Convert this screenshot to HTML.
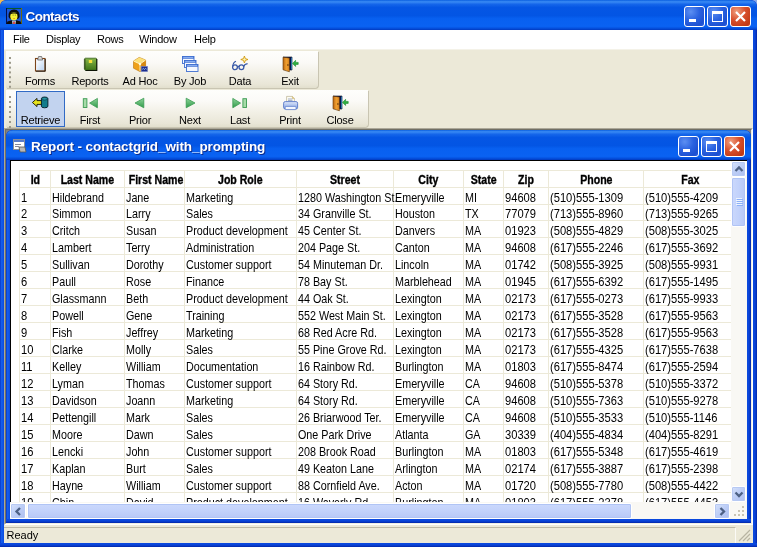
<!DOCTYPE html>
<html><head><meta charset="utf-8"><title>Contacts</title>
<style>
*{box-sizing:border-box;margin:0;padding:0}
html,body{width:757px;height:547px;overflow:hidden;background:#fff;font-family:"Liberation Sans",sans-serif;font-size:11px;color:#000}
.abs{position:absolute}
#win{will-change:transform;position:absolute;left:0;top:0;width:757px;height:547px;background:#0a3fd6;border-radius:6px 6px 0 0;overflow:hidden}
#tbar{position:absolute;left:0;top:0;width:757px;height:30px;
 background:linear-gradient(180deg,#0a5fe0 0%,#3a8bf4 6%,#1566ea 14%,#0556e4 25%,#0355e4 52%,#0860f0 62%,#0a62f2 88%,#0552e0 94%,#0340c8 98%,#0340c8 100%);border-radius:7px 7px 0 0}
#tbar .ttl{position:absolute;left:25.5px;top:9px;font:bold 13.5px "Liberation Sans",sans-serif;color:#fff;text-shadow:1px 1px 0 #0a2a8c;letter-spacing:-0.55px;white-space:nowrap}
#lb{position:absolute;left:0;top:30px;width:4px;height:517px;background:linear-gradient(90deg,#0a36c8,#1560ee 40%,#0a4ae0)}
#rb{position:absolute;left:753px;top:30px;width:4px;height:517px;background:linear-gradient(90deg,#0a4ae0,#0a44d8 50%,#0326a8)}
#bb{position:absolute;left:0;top:543px;width:757px;height:4px;background:linear-gradient(180deg,#0a4ae0,#0a44d8 50%,#0326a8)}
#client{position:absolute;left:4px;top:30px;width:749px;height:513px;background:#ece9d8}
#menu{position:absolute;left:0;top:0;width:749px;height:20px;background:#fff;border-bottom:1px solid #f4f2e8}
#menu span{position:absolute;top:3px;font-size:11px;letter-spacing:-0.25px;white-space:nowrap}
.cbtn{position:absolute;width:21px;height:21px;border:1px solid #fff;border-radius:3px;background:radial-gradient(circle at 30% 25%,#5c8ff2 0%,#2a62e0 45%,#1c4fd0 80%,#2a5ee0 100%)}
.cbtn.close{background:radial-gradient(circle at 30% 25%,#f0a080 0%,#d8502c 45%,#c03814 85%,#c84a28 100%)}
.cbtn svg{position:absolute;left:0;top:0}
.tb{position:absolute;height:37px;background:linear-gradient(180deg,#fefefc 0%,#fbfaf7 30%,#f2f0e6 60%,#e9e6d7 90%,#e2dfcd 100%);border-radius:0 0 4px 0;box-shadow:1px 1px 0 #c9c5b2}
.grip{position:absolute;left:3px;width:3px}
.tbtn{position:absolute;width:48px;height:37px;text-align:center}
.tbtn .lbl{position:absolute;left:-10px;right:-10px;top:23px;font-size:11px;letter-spacing:-0.2px;text-align:center;white-space:nowrap}
.tbtn svg{position:absolute;left:16px;top:4px;overflow:visible}
.tbtn.sel{box-shadow:0 0 0 1px #316ac5 inset;background:#c2d3ef}
#child{position:absolute;left:2px;top:100px;width:745px;height:393px;background:#0a3fd6;border-radius:6px 6px 0 0;overflow:hidden}
#ctbar{position:absolute;left:0;top:0;width:745px;height:30px;border-radius:7px 7px 0 0;
 background:linear-gradient(180deg,#0a5fe0 0%,#3a8bf4 6%,#1566ea 14%,#0556e4 25%,#0355e4 52%,#0860f0 62%,#0a62f2 88%,#0552e0 94%,#0340c8 98%,#0340c8 100%)}
#ctbar .ttl{position:absolute;left:25px;top:9px;font:bold 13.5px "Liberation Sans",sans-serif;color:#fff;text-shadow:1px 1px 0 #0a2a8c;letter-spacing:-0.1px;white-space:nowrap}
#clb{position:absolute;left:0;top:30px;width:4px;height:363px;background:linear-gradient(90deg,#0a36c8,#1560ee 40%,#0a4ae0)}
#crb{position:absolute;left:741px;top:30px;width:4px;height:363px;background:linear-gradient(90deg,#0a4ae0,#0a44d8 50%,#0326a8)}
#cbb{position:absolute;left:0;top:389px;width:745px;height:4px;background:linear-gradient(180deg,#0a4ae0,#0a44d8 50%,#0326a8)}
#cclient{position:absolute;left:4px;top:30px;width:737px;height:359px;background:#fff;border-top:1px solid #000;overflow:hidden}
#lline{position:absolute;left:0;top:0;width:1px;height:341px;background:#000}
#view{position:absolute;left:1px;top:0;width:720px;height:341px;overflow:hidden;background:#fff}
table.grid{position:absolute;left:8px;top:9px;border-collapse:collapse;table-layout:fixed;width:717px}
table.grid td,table.grid th{border:1px solid #ece9d8;height:17px;padding:0 0 0 2px;font-size:11px;line-height:16px;white-space:nowrap;overflow:visible;text-align:left;vertical-align:top}
table.grid td{padding-top:4px;line-height:12px;padding-left:1px;font-size:12.4px}
table.grid td span{display:inline-block;transform:scaleX(0.868);transform-origin:0 50%}
table.grid td span.n{transform:scaleX(0.9)}
table.grid tr.s td{height:16px;line-height:12px;padding-top:3px}
table.grid th{font-weight:bold;font-size:12px;text-align:center;padding:2px 0 0 0;line-height:14px}
table.grid th span{display:inline-block;transform:scaleX(0.88);transform-origin:50% 50%;-webkit-text-stroke:0.35px #000}
.c0{width:31px}.c1{width:74px}.c2{width:60px}.c3{width:112px}.c4{width:97px}.c5{width:70px}.c6{width:40px}.c7{width:45px}.c8{width:95px}.c9{width:93px}
#vs{position:absolute;left:721px;top:0;width:16px;height:341px;background:#f9f8f4}
#hs{position:absolute;left:0;top:341px;width:721px;height:17px;background:#f9f8f4}
#corner{position:absolute;left:721px;top:341px;width:16px;height:17px;background:#f9f8f4}
.sbtn{position:absolute;width:15px;height:15px;border:1px solid #fff;border-radius:2px;background:linear-gradient(135deg,#d6e2fb,#bccdf6 50%,#aebff0);box-shadow:0 0 0 1px #b7c9f3 inset}
.thumb{position:absolute;border:1px solid #fff;border-radius:2px;background:linear-gradient(180deg,#cbd8fc,#c2d2fb 50%,#b7c8f7);box-shadow:0 0 0 1px #b0c4f5 inset}
#status{position:absolute;left:0;top:497px;width:749px;height:16px;background:#ece9d8}
#status .pn{position:absolute;left:0;top:0;width:732px;height:16px;border-top:1px solid #bdb9a6;border-right:1px solid #fbfaf6}
#status span{position:absolute;left:2.5px;top:1.5px;font-size:11px}
</style></head><body><svg width="0" height="0" style="position:absolute"><defs><linearGradient id="gGreen" x1="0" y1="0" x2="0" y2="1"><stop offset="0" stop-color="#86b648"/><stop offset="1" stop-color="#3f7418"/></linearGradient><linearGradient id="gPaper" x1="0" y1="0" x2="1" y2="1"><stop offset="0" stop-color="#ffffff"/><stop offset="1" stop-color="#bcd4f0"/></linearGradient><linearGradient id="gDoor" x1="0" y1="0" x2="1" y2="0"><stop offset="0" stop-color="#b86410"/><stop offset="0.5" stop-color="#f0a030"/><stop offset="1" stop-color="#e08820"/></linearGradient><linearGradient id="gTri" x1="0" y1="0" x2="0" y2="1"><stop offset="0" stop-color="#8fd49a"/><stop offset="1" stop-color="#2f9a48"/></linearGradient><linearGradient id="gPrn" x1="0" y1="0" x2="0" y2="1"><stop offset="0" stop-color="#dfe8fb"/><stop offset="1" stop-color="#7f9fe0"/></linearGradient></defs></svg>
<div class="abs" style="left:0;top:0;width:7px;height:7px;background:#f2bc50"></div><div class="abs" style="left:750px;top:0;width:7px;height:7px;background:#8aaae8"></div>
<div id="win">
 <div id="tbar">
  <svg class="abs" style="left:6px;top:8px" width="16" height="16" viewBox="0 0 16 16">
   <rect x="0" y="0" width="16" height="16" fill="#1a56d8"/>
   <rect x="0" y="0" width="16" height="1" fill="#0a5a2a"/><rect x="15" y="0" width="1" height="16" fill="#6a6a10"/>
   <rect x="0" y="0" width="1" height="16" fill="#06104a"/>
   <path d="M2.6 9 Q2 2 8 1.6 Q14 2 13.6 9 L12 11 L4 11 Z" fill="#0c0c0c"/>
   <ellipse cx="7.9" cy="8.2" rx="3.6" ry="4.3" fill="#f4f032"/>
   <path d="M4.3 6.4 Q5 3.6 8 4.4 Q11 3.6 11.6 6.4 Q10 5.2 8 5.6 Q6 5.2 4.3 6.4Z" fill="#0c0c0c"/>
   <path d="M0.6 16 L1.4 13.6 L5.6 12.2 L8 14.6 L10.4 12.2 L14.6 13.6 L15.4 16Z" fill="#0c0c0c"/>
   <path d="M6.2 12.8 L8 13.8 L9.8 12.8 L9.4 16 L6.6 16Z" fill="#fff"/>
   <rect x="7.2" y="13.8" width="1.6" height="2.2" fill="#d42020"/>
   <rect x="6.6" y="6.6" width="1" height="1" fill="#807820"/><rect x="8.8" y="6.6" width="1" height="1" fill="#807820"/>
   <rect x="7.2" y="10" width="1.8" height="0.9" fill="#e8902a"/>
  </svg>
  <div class="ttl">Contacts</div>
  <div class="cbtn" style="left:684px;top:6px"><svg width="19" height="19"><rect x="4" y="12" width="7" height="3" fill="#fff"/></svg></div>
  <div class="cbtn" style="left:707px;top:6px"><svg width="19" height="19"><rect x="4.5" y="5.5" width="10" height="9" fill="none" stroke="#fff" stroke-width="1"/><rect x="4" y="4" width="11" height="3" fill="#fff"/></svg></div>
  <div class="cbtn close" style="left:730px;top:6px"><svg width="19" height="19"><path d="M5 5 L14 14 M14 5 L5 14" stroke="#fff" stroke-width="2.2" stroke-linecap="butt"/></svg></div>
 </div>
 <div id="lb"></div><div id="rb"></div><div id="bb"></div>
 <div id="client">
  <div id="menu">
   <span style="left:9px">File</span><span style="left:42px">Display</span><span style="left:93px">Rows</span><span style="left:135px">Window</span><span style="left:190px">Help</span>
  </div>
  <!-- toolbar 1 -->
  <div class="tb" style="left:2px;top:21px;width:312px">
   <svg class="grip" style="top:6px" width="3" height="34"><g fill="#9d9a8b"><rect x="0" y="0.0" width="2" height="2"/><rect x="0" y="4.8" width="2" height="2"/><rect x="0" y="9.6" width="2" height="2"/><rect x="0" y="14.4" width="2" height="2"/><rect x="0" y="19.2" width="2" height="2"/><rect x="0" y="24.0" width="2" height="2"/><rect x="0" y="28.8" width="2" height="2"/></g></svg>
   <div class="tbtn" style="left:10px;top:1px"><svg width="16" height="16" viewBox="0 0 16 16"><rect x="3.5" y="2.5" width="9.5" height="12.5" fill="#f2f6fc" stroke="#7c4418" stroke-width="1.1"/><path d="M13.2 3 V15.2 H4" stroke="#1a1208" stroke-width="0.9" fill="none"/><rect x="4.8" y="4" width="7" height="10" fill="url(#gPaper)"/><path d="M6 2.5 L6.6 0.5 H9.6 L10.2 2.5 L10.6 4 H5.6Z" fill="#d8d8d8" stroke="#555" stroke-width="0.7"/></svg><div class="lbl">Forms</div></div>
   <div class="tbtn" style="left:60px;top:1px"><svg width="16" height="16" viewBox="0 0 16 16"><rect x="2.6" y="2.2" width="12" height="12" rx="0.8" fill="url(#gGreen)" stroke="#35601a" stroke-width="0.8"/><path d="M14.8 3 V14.5 H3.5" stroke="#0c1404" stroke-width="1.1" fill="none"/><rect x="6.8" y="4" width="3.4" height="3" fill="#f4de3a"/><path d="M1.8 4h2M1.8 6h2M1.8 8h2M1.8 10h2M1.8 12h2" stroke="#2a3a1a" stroke-width="0.9"/></svg><div class="lbl">Reports</div></div>
   <div class="tbtn" style="left:110px;top:1px"><svg width="16" height="16" viewBox="0 0 16 16"><path d="M1.5 5 L7.2 1.4 L13.6 4 L13.6 11.6 L8 15.6 L1.5 12.2Z" fill="#eea018" stroke="#b87408" stroke-width="0.6"/><path d="M1.5 5 L7.2 1.4 L13.6 4 L8 8Z" fill="#fbe07a"/><path d="M8 8 L13.6 4 L13.6 11.6 L8 15.6Z" fill="#d88a10"/><path d="M8 8 L1.5 5 M8 8 L13.6 4 M8 8 V15" stroke="#fff6c8" stroke-width="0.9" fill="none"/><circle cx="8" cy="8" r="1.2" fill="#fffbe6"/><rect x="9.2" y="10.4" width="6.4" height="5.2" fill="#1c2c8c" stroke="#7888c8" stroke-width="0.6"/><path d="M10.2 13.4 L11.4 12.4 L12.4 13.6 L13.4 12.4 L14.6 13.2" stroke="#a8d8f8" stroke-width="0.8" fill="none"/></svg><div class="lbl">Ad Hoc</div></div>
   <div class="tbtn" style="left:160px;top:1px"><svg width="16" height="16" viewBox="0 0 16 16"><rect x="0.5" y="0.5" width="11.5" height="7" fill="#f4f8ff" stroke="#3f6fd0" stroke-width="0.9"/><rect x="0.5" y="0.5" width="11.5" height="2.2" fill="#3a6ad0"/><rect x="1.2" y="1.0" width="10" height="0.8" fill="#9cc0f8"/><rect x="2.5" y="4.5" width="11.5" height="7" fill="#f4f8ff" stroke="#3f6fd0" stroke-width="0.9"/><rect x="2.5" y="4.5" width="11.5" height="2.2" fill="#3a6ad0"/><rect x="3.2" y="5.0" width="10" height="0.8" fill="#9cc0f8"/><rect x="4.5" y="8.5" width="11.5" height="7" fill="#f4f8ff" stroke="#3f6fd0" stroke-width="0.9"/><rect x="4.5" y="8.5" width="11.5" height="2.2" fill="#3a6ad0"/><rect x="5.2" y="9.0" width="10" height="0.8" fill="#9cc0f8"/></svg><div class="lbl">By Job</div></div>
   <div class="tbtn" style="left:210px;top:1px"><svg width="16" height="16" viewBox="0 0 16 16"><circle cx="3" cy="11.3" r="2.4" fill="none" stroke="#3a5aa8" stroke-width="1.3"/><circle cx="9.4" cy="11.3" r="2.4" fill="none" stroke="#3a5aa8" stroke-width="1.3"/><path d="M0.7 10.5 Q1 6.5 4 5.3 M11.8 10.6 Q12.5 8 15.6 7.6 M5.4 10.8 Q6.2 10 7 10.8" stroke="#3a5aa8" stroke-width="1.1" fill="none"/><path d="M12.4 0 L13.3 2.6 L16 3.5 L13.3 4.4 L12.4 7 L11.5 4.4 L8.8 3.5 L11.5 2.6Z" fill="#fff4b0" stroke="#d09810" stroke-width="0.9"/></svg><div class="lbl">Data</div></div>
   <div class="tbtn" style="left:260px;top:1px"><svg width="16" height="16" viewBox="0 0 16 16"><path d="M1 1 H10 V14 H7.4" fill="#0a1248" stroke="#080c20" stroke-width="0.6"/><path d="M9.6 1.5 V13.6" stroke="#3a9ad0" stroke-width="0.8"/><path d="M1 1.2 L7.4 2 L7.4 15.8 L1 13.8Z" fill="url(#gDoor)" stroke="#5a3408" stroke-width="0.6"/><circle cx="5.9" cy="9" r="0.7" fill="#402000"/><path d="M10.5 7.4 L13.6 4.3 L13.6 6.4 L16.2 6.4 L16.2 8.4 L13.6 8.4 L13.6 10.5Z" fill="#30b040" stroke="#188828" stroke-width="0.6"/></svg><div class="lbl">Exit</div></div>
  </div>
  <!-- toolbar 2 -->
  <div class="tb" style="left:2px;top:60px;width:362px;height:37px">
   <svg class="grip" style="top:6px" width="3" height="34"><g fill="#9d9a8b"><rect x="0" y="0.0" width="2" height="2"/><rect x="0" y="5.0" width="2" height="2"/><rect x="0" y="10.0" width="2" height="2"/><rect x="0" y="15.0" width="2" height="2"/><rect x="0" y="20.0" width="2" height="2"/><rect x="0" y="25.0" width="2" height="2"/><rect x="0" y="30.0" width="2" height="2"/></g></svg>
   <div class="tbtn sel" style="left:10px;top:1px;width:49px;height:36px"><svg width="16" height="16" viewBox="0 0 16 16"><path d="M0.4 7.5 L5 3.4 L5 5.6 L10 5.6 L10 9.4 L5 9.4 L5 11.6Z" fill="#e6e21c" stroke="#141400" stroke-width="0.9"/><path d="M9.4 3.6 Q9.4 2 12.6 2 Q15.9 2 15.9 3.6 V11.2 Q15.9 12.8 12.6 12.8 Q9.4 12.8 9.4 11.2Z" fill="#127c8c" stroke="#041c24" stroke-width="0.9"/><ellipse cx="12.6" cy="3.8" rx="2.8" ry="1.2" fill="#2aa0b0" stroke="#041c24" stroke-width="0.5"/></svg><div class="lbl">Retrieve</div></div>
   <div class="tbtn" style="left:60px;top:1px"><svg width="16" height="16" viewBox="0 0 16 16"><rect x="1.3" y="3.7" width="3.6" height="8.8" fill="#a6dba8" stroke="#3a9a50" stroke-width="0.9"/><path d="M15.4 3.4 L7.6 8.1 L15.4 12.8Z" fill="url(#gTri)" stroke="#3a9a50" stroke-width="0.8"/></svg><div class="lbl">First</div></div>
   <div class="tbtn" style="left:110px;top:1px"><svg width="16" height="16" viewBox="0 0 16 16"><path d="M11.8 3.2 L3 8 L11.8 12.8Z" fill="url(#gTri)" stroke="#3a9a50" stroke-width="0.8"/></svg><div class="lbl">Prior</div></div>
   <div class="tbtn" style="left:160px;top:1px"><svg width="16" height="16" viewBox="0 0 16 16"><path d="M4.2 3.2 L13 8 L4.2 12.8Z" fill="url(#gTri)" stroke="#3a9a50" stroke-width="0.8"/></svg><div class="lbl">Next</div></div>
   <div class="tbtn" style="left:210px;top:1px"><svg width="16" height="16" viewBox="0 0 16 16"><rect x="10.9" y="3.7" width="3.6" height="8.8" fill="#a6dba8" stroke="#3a9a50" stroke-width="0.9"/><path d="M0.8 3.4 L8.6 8.1 L0.8 12.8Z" fill="url(#gTri)" stroke="#3a9a50" stroke-width="0.8"/></svg><div class="lbl">Last</div></div>
   <div class="tbtn" style="left:260px;top:1px"><svg width="16" height="16" viewBox="0 0 16 16"><path d="M4.6 7 V1.4 H10.4 L12.4 3.4 V7Z" fill="#fffdf4" stroke="#b8b090" stroke-width="0.7"/><path d="M10.4 1.4 V3.4 H12.4" fill="#f0d890" stroke="#c8a850" stroke-width="0.5"/><path d="M6 4h4.5M6 5.6h4.5" stroke="#8898b8" stroke-width="0.8"/><rect x="1.6" y="6.6" width="14" height="7.4" rx="1.6" fill="url(#gPrn)" stroke="#5878c8" stroke-width="0.9"/><rect x="3.2" y="11.4" width="10.8" height="3.2" rx="0.6" fill="#f4f7fe" stroke="#5878c8" stroke-width="0.7"/></svg><div class="lbl">Print</div></div>
   <div class="tbtn" style="left:310px;top:1px"><svg width="16" height="16" viewBox="0 0 16 16"><path d="M1 1 H10 V14 H7.4" fill="#0a1248" stroke="#080c20" stroke-width="0.6"/><path d="M9.6 1.5 V13.6" stroke="#3a9ad0" stroke-width="0.8"/><path d="M1 1.2 L7.4 2 L7.4 15.8 L1 13.8Z" fill="url(#gDoor)" stroke="#5a3408" stroke-width="0.6"/><circle cx="5.9" cy="9" r="0.7" fill="#402000"/><path d="M10.5 7.4 L13.6 4.3 L13.6 6.4 L16.2 6.4 L16.2 8.4 L13.6 8.4 L13.6 10.5Z" fill="#30b040" stroke="#188828" stroke-width="0.6"/></svg><div class="lbl">Close</div></div>
  </div>
  <!-- MDI client -->
  <div class="abs" style="left:0;top:98px;width:749px;height:397px;background:#808080;border-left:1px solid #aca899;border-top:1px solid #aca899;border-right:1px solid #fff;border-bottom:1px solid #fff"></div>
  <div class="abs" style="left:1px;top:99px;width:747px;height:395px;border-left:1px solid #716f64;border-top:1px solid #716f64;border-right:1px solid #f1efe2;border-bottom:1px solid #f1efe2"></div>
  <!-- MDI child -->
  <div id="child">
   <div id="ctbar">
    <svg class="abs" style="left:7px;top:9px" width="14" height="14" viewBox="0 0 14 14"><rect x="0.5" y="0.5" width="11" height="10" fill="#fff" stroke="#8a8f9c"/><rect x="1" y="1" width="10" height="2" fill="#5a7cc8"/><rect x="2" y="5" width="6" height="1" fill="#889"/><rect x="2" y="7" width="4" height="1" fill="#889"/><path d="M6 8 L12 8 L13 13 L7 13Z" fill="#b8b8b8" stroke="#555" stroke-width="0.8"/></svg>
    <div class="ttl">Report - contactgrid_with_prompting</div>
    <div class="cbtn" style="left:672px;top:6px"><svg width="19" height="19"><rect x="4" y="12" width="7" height="3" fill="#fff"/></svg></div>
    <div class="cbtn" style="left:695px;top:6px"><svg width="19" height="19"><rect x="4.5" y="5.5" width="10" height="9" fill="none" stroke="#fff" stroke-width="1"/><rect x="4" y="4" width="11" height="3" fill="#fff"/></svg></div>
    <div class="cbtn close" style="left:718px;top:6px"><svg width="19" height="19"><path d="M5 5 L14 14 M14 5 L5 14" stroke="#fff" stroke-width="2.2"/></svg></div>
   </div>
   <div id="clb"></div><div id="crb"></div><div id="cbb"></div>
   <div id="cclient">
    <div id="lline"></div>
    <div id="view">
<table class="grid"><colgroup><col class="c0"><col class="c1"><col class="c2"><col class="c3"><col class="c4"><col class="c5"><col class="c6"><col class="c7"><col class="c8"><col class="c9"></colgroup>
<tr class="hd"><th><span>Id</span></th><th><span>Last Name</span></th><th><span>First Name</span></th><th><span>Job Role</span></th><th><span>Street</span></th><th><span>City</span></th><th><span>State</span></th><th><span>Zip</span></th><th><span>Phone</span></th><th><span>Fax</span></th></tr>
<tr><td><span class="n">1</span></td><td><span>Hildebrand</span></td><td><span>Jane</span></td><td><span>Marketing</span></td><td><span>1280 Washington St.</span></td><td><span>Emeryville</span></td><td><span>MI</span></td><td><span class="n">94608</span></td><td><span class="n">(510)555-1309</span></td><td><span class="n">(510)555-4209</span></td></tr>
<tr class="s"><td><span class="n">2</span></td><td><span>Simmon</span></td><td><span>Larry</span></td><td><span>Sales</span></td><td><span>34 Granville St.</span></td><td><span>Houston</span></td><td><span>TX</span></td><td><span class="n">77079</span></td><td><span class="n">(713)555-8960</span></td><td><span class="n">(713)555-9265</span></td></tr>
<tr><td><span class="n">3</span></td><td><span>Critch</span></td><td><span>Susan</span></td><td><span>Product development</span></td><td><span>45 Center St.</span></td><td><span>Danvers</span></td><td><span>MA</span></td><td><span class="n">01923</span></td><td><span class="n">(508)555-4829</span></td><td><span class="n">(508)555-3025</span></td></tr>
<tr><td><span class="n">4</span></td><td><span>Lambert</span></td><td><span>Terry</span></td><td><span>Administration</span></td><td><span>204 Page St.</span></td><td><span>Canton</span></td><td><span>MA</span></td><td><span class="n">94608</span></td><td><span class="n">(617)555-2246</span></td><td><span class="n">(617)555-3692</span></td></tr>
<tr><td><span class="n">5</span></td><td><span>Sullivan</span></td><td><span>Dorothy</span></td><td><span>Customer support</span></td><td><span>54 Minuteman Dr.</span></td><td><span>Lincoln</span></td><td><span>MA</span></td><td><span class="n">01742</span></td><td><span class="n">(508)555-3925</span></td><td><span class="n">(508)555-9931</span></td></tr>
<tr><td><span class="n">6</span></td><td><span>Paull</span></td><td><span>Rose</span></td><td><span>Finance</span></td><td><span>78 Bay St.</span></td><td><span>Marblehead</span></td><td><span>MA</span></td><td><span class="n">01945</span></td><td><span class="n">(617)555-6392</span></td><td><span class="n">(617)555-1495</span></td></tr>
<tr><td><span class="n">7</span></td><td><span>Glassmann</span></td><td><span>Beth</span></td><td><span>Product development</span></td><td><span>44 Oak St.</span></td><td><span>Lexington</span></td><td><span>MA</span></td><td><span class="n">02173</span></td><td><span class="n">(617)555-0273</span></td><td><span class="n">(617)555-9933</span></td></tr>
<tr><td><span class="n">8</span></td><td><span>Powell</span></td><td><span>Gene</span></td><td><span>Training</span></td><td><span>552 West Main St.</span></td><td><span>Lexington</span></td><td><span>MA</span></td><td><span class="n">02173</span></td><td><span class="n">(617)555-3528</span></td><td><span class="n">(617)555-9563</span></td></tr>
<tr><td><span class="n">9</span></td><td><span>Fish</span></td><td><span>Jeffrey</span></td><td><span>Marketing</span></td><td><span>68 Red Acre Rd.</span></td><td><span>Lexington</span></td><td><span>MA</span></td><td><span class="n">02173</span></td><td><span class="n">(617)555-3528</span></td><td><span class="n">(617)555-9563</span></td></tr>
<tr><td><span class="n">10</span></td><td><span>Clarke</span></td><td><span>Molly</span></td><td><span>Sales</span></td><td><span>55 Pine Grove Rd.</span></td><td><span>Lexington</span></td><td><span>MA</span></td><td><span class="n">02173</span></td><td><span class="n">(617)555-4325</span></td><td><span class="n">(617)555-7638</span></td></tr>
<tr><td><span class="n">11</span></td><td><span>Kelley</span></td><td><span>William</span></td><td><span>Documentation</span></td><td><span>16 Rainbow Rd.</span></td><td><span>Burlington</span></td><td><span>MA</span></td><td><span class="n">01803</span></td><td><span class="n">(617)555-8474</span></td><td><span class="n">(617)555-2594</span></td></tr>
<tr><td><span class="n">12</span></td><td><span>Lyman</span></td><td><span>Thomas</span></td><td><span>Customer support</span></td><td><span>64 Story Rd.</span></td><td><span>Emeryville</span></td><td><span>CA</span></td><td><span class="n">94608</span></td><td><span class="n">(510)555-5378</span></td><td><span class="n">(510)555-3372</span></td></tr>
<tr><td><span class="n">13</span></td><td><span>Davidson</span></td><td><span>Joann</span></td><td><span>Marketing</span></td><td><span>64 Story Rd.</span></td><td><span>Emeryville</span></td><td><span>CA</span></td><td><span class="n">94608</span></td><td><span class="n">(510)555-7363</span></td><td><span class="n">(510)555-9278</span></td></tr>
<tr><td><span class="n">14</span></td><td><span>Pettengill</span></td><td><span>Mark</span></td><td><span>Sales</span></td><td><span>26 Briarwood Ter.</span></td><td><span>Emeryville</span></td><td><span>CA</span></td><td><span class="n">94608</span></td><td><span class="n">(510)555-3533</span></td><td><span class="n">(510)555-1146</span></td></tr>
<tr><td><span class="n">15</span></td><td><span>Moore</span></td><td><span>Dawn</span></td><td><span>Sales</span></td><td><span>One Park Drive</span></td><td><span>Atlanta</span></td><td><span>GA</span></td><td><span class="n">30339</span></td><td><span class="n">(404)555-4834</span></td><td><span class="n">(404)555-8291</span></td></tr>
<tr><td><span class="n">16</span></td><td><span>Lencki</span></td><td><span>John</span></td><td><span>Customer support</span></td><td><span>208 Brook Road</span></td><td><span>Burlington</span></td><td><span>MA</span></td><td><span class="n">01803</span></td><td><span class="n">(617)555-5348</span></td><td><span class="n">(617)555-4619</span></td></tr>
<tr><td><span class="n">17</span></td><td><span>Kaplan</span></td><td><span>Burt</span></td><td><span>Sales</span></td><td><span>49 Keaton Lane</span></td><td><span>Arlington</span></td><td><span>MA</span></td><td><span class="n">02174</span></td><td><span class="n">(617)555-3887</span></td><td><span class="n">(617)555-2398</span></td></tr>
<tr><td><span class="n">18</span></td><td><span>Hayne</span></td><td><span>William</span></td><td><span>Customer support</span></td><td><span>88 Cornfield Ave.</span></td><td><span>Acton</span></td><td><span>MA</span></td><td><span class="n">01720</span></td><td><span class="n">(508)555-7780</span></td><td><span class="n">(508)555-4422</span></td></tr>
<tr><td><span class="n">19</span></td><td><span>Chin</span></td><td><span>David</span></td><td><span>Product development</span></td><td><span>16 Waverly Rd.</span></td><td><span>Burlington</span></td><td><span>MA</span></td><td><span class="n">01803</span></td><td><span class="n">(617)555-2378</span></td><td><span class="n">(617)555-4453</span></td></tr>
</table>
    </div>
    <div id="vs">
     <div class="sbtn" style="left:0;top:0;width:15px;height:16px"><svg width="14" height="14"><path d="M3.5 9 L7 5.5 L10.5 9" fill="none" stroke="#4d6185" stroke-width="2.3"/></svg></div>
     <div class="thumb" style="left:0;top:16px;width:15px;height:50px;background:linear-gradient(90deg,#cbd8fc,#c2d2fb 50%,#b7c8f7)"><svg width="14" height="48" style="position:absolute;left:0;top:0"><g stroke="#eef4fe" stroke-width="1"><path d="M4 20.5h6M4 22.5h6M4 24.5h6M4 26.5h6"/></g><g stroke="#8cb0f8" stroke-width="1"><path d="M5 21.5h6M5 23.5h6M5 25.5h6M5 27.5h6"/></g></svg></div>
     <div class="sbtn" style="left:0;top:325px;width:15px;height:16px"><svg width="14" height="14"><path d="M3.5 5.5 L7 9 L10.5 5.5" fill="none" stroke="#4d6185" stroke-width="2.3"/></svg></div>
    </div>
    <div id="hs">
     <div class="sbtn" style="left:0;top:1px;width:16px;height:16px"><svg width="14" height="15"><path d="M9 4 L5.5 7.5 L9 11" fill="none" stroke="#4d6185" stroke-width="2.3"/></svg></div>
     <div class="thumb" style="left:17px;top:1px;width:605px;height:16px"></div>
     <div class="sbtn" style="left:704px;top:1px;width:16px;height:16px"><svg width="14" height="15"><path d="M5.5 4 L9 7.5 L5.5 11" fill="none" stroke="#4d6185" stroke-width="2.3"/></svg></div>
    </div>
    <div id="corner"><svg width="16" height="17"><g fill="#c8c4b4"><rect x="11" y="4" width="2" height="2"/><rect x="7" y="8" width="2" height="2"/><rect x="11" y="8" width="2" height="2"/><rect x="3" y="12" width="2" height="2"/><rect x="7" y="12" width="2" height="2"/><rect x="11" y="12" width="2" height="2"/></g></svg></div>
   </div>
  </div>
  <div id="status"><div class="pn"></div><span>Ready</span>
   <svg class="abs" style="left:733px;top:1px" width="14" height="14"><g stroke="#b8b4a2" stroke-width="1.2"><path d="M13 2 L2 13 M13 6 L6 13 M13 10 L10 13"/></g></svg>
  </div>
 </div>
</div>
</body></html>
